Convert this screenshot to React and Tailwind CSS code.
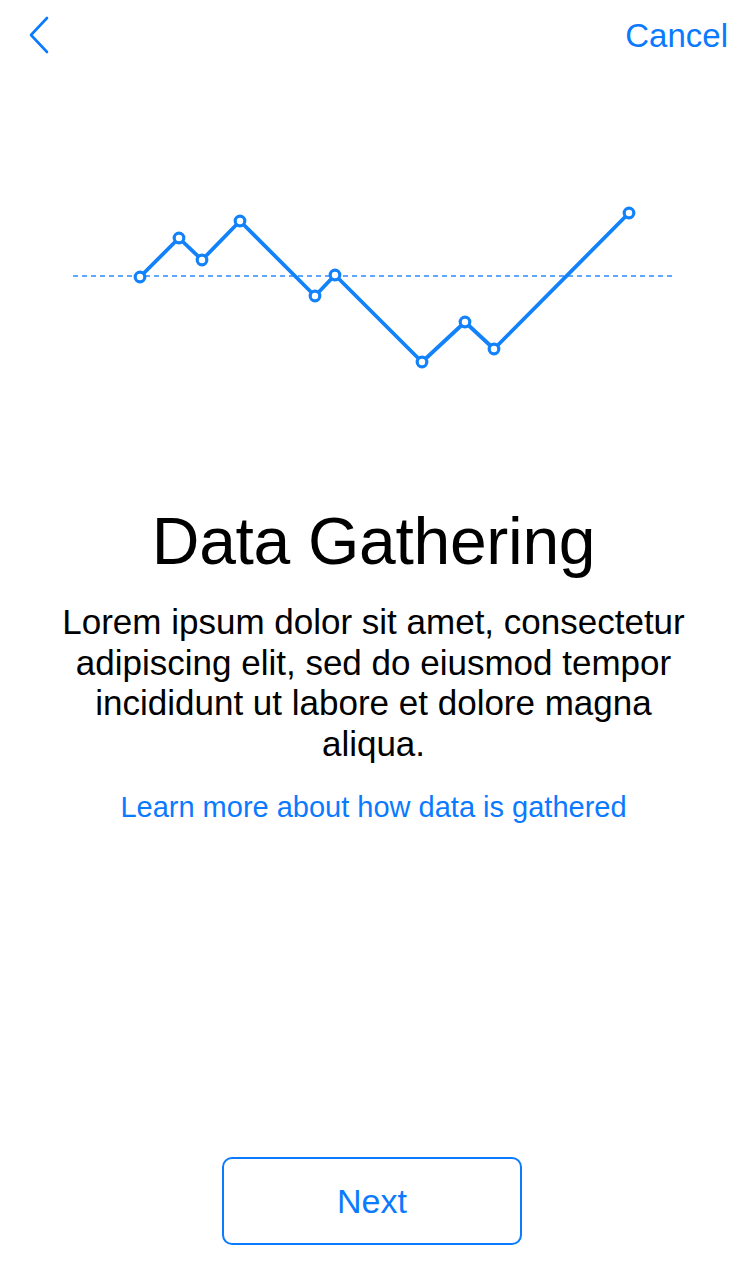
import React from "react";

const points = [
  [140, 277], [179, 238], [202, 260], [240, 221], [315, 296],
  [335, 275], [422, 362], [465, 322], [494, 349], [629, 213],
];

function Chart() {
  const line = points.map((p) => p.join(",")).join(" ");
  return (
    <svg width="747" height="260" viewBox="0 150 747 260" className="block">
      <line x1="73" y1="276" x2="672" y2="276" stroke="#2a8cff" strokeWidth="1.3" strokeDasharray="5 4" />
      <polyline points={line} fill="none" stroke="#1282fb" strokeWidth="3.8" strokeLinejoin="round" />
      {points.map(([x, y], i) => (
        <circle key={i} cx={x} cy={y} r="4.8" fill="white" stroke="#1282fb" strokeWidth="3.2" />
      ))}
    </svg>
  );
}

export default function App() {
  return (
    <main
      className="w-[747px] h-[1285px] bg-white flex flex-col overflow-hidden"
      style={{ fontFamily: '"Liberation Sans", Arial, sans-serif' }}
    >
      {/* Nav bar */}
      <header className="flex items-center justify-between h-[68px] pl-[28px] pr-[19px] pt-[2px]">
        <svg width="22" height="38" viewBox="0 0 22 38">
          <polyline points="19,2 3,19 19,36" fill="none" stroke="#0a7aff" strokeWidth="2.6" strokeLinecap="round" strokeLinejoin="round" />
        </svg>
        <span className="text-[33px] text-[#0a7aff] leading-none">Cancel</span>
      </header>

      {/* Chart */}
      <div className="mt-[82px]">
        <Chart />
      </div>

      {/* Copy */}
      <section className="flex flex-col items-center text-center mt-[98px]">
        <h1 className="text-[66px] leading-none text-black font-light tracking-[-0.3px]">Data Gathering</h1>
        <p className="mt-[28px] text-[35px] leading-[40.5px] text-black w-[650px]">
          Lorem ipsum dolor sit amet, consectetur adipiscing elit, sed do eiusmod tempor incididunt ut labore et dolore magna aliqua.
        </p>
        <a className="mt-[29px] text-[29px] text-[#0a7aff] leading-none">Learn more about how data is gathered</a>
      </section>

      {/* Button */}
      <div className="mt-auto mb-[40px] flex justify-center pr-[3px]">
        <button className="w-[300px] h-[88px] border-2 border-[#0a7aff] rounded-[10px] text-[34px] text-[#0a7aff]">
          Next
        </button>
      </div>
    </main>
  );
}
